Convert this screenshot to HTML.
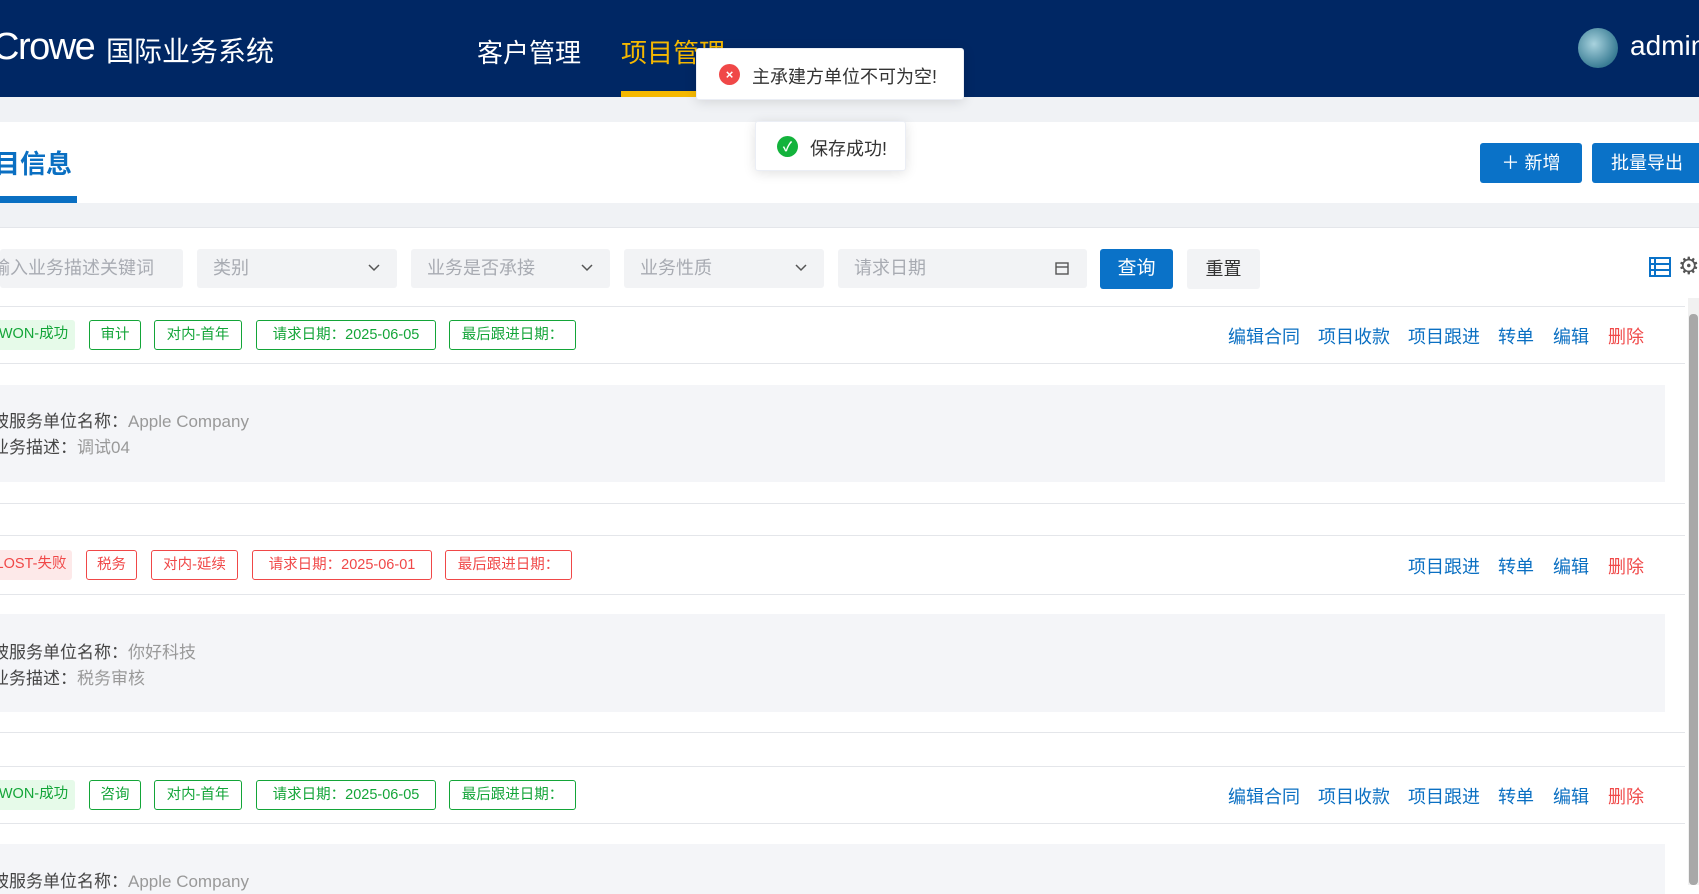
<!DOCTYPE html>
<html><head><meta charset="utf-8"><style>
*{margin:0;padding:0;box-sizing:border-box}
body{width:1699px;height:885px;overflow:hidden;background:#fff;font-family:"Liberation Sans","Noto Sans CJK SC",sans-serif;position:relative}
.a{position:absolute;white-space:nowrap}
.hdr{left:0;top:0;width:1699px;height:97px;background:#002764}
.gray{background:#f0f2f5}
.sel{height:39px;background:#f2f3f5;border-radius:3px;color:#a8abb2;font-size:18px;line-height:39px;padding-left:16px}
.sel svg{position:absolute;right:17px;top:15px}
.tag{height:30px;line-height:28px;font-size:14.5px;border:1px solid;border-radius:3px;text-align:center}
.g{color:#13a538;border-color:#13a538}
.r{color:#f04848;border-color:#f04848}
.act{font-size:18px;color:#0a6fc2}
.line{height:1px;background:#e4e6ea;left:0;width:1685px}
.box{left:0;width:1665px;background:#f4f5f8}
.lb{font-size:17px;color:#444}
.lb span{color:#999}
</style></head><body>
<div class="a hdr"></div>
<div class="a" style="left:-8px;top:26px;font-size:38px;color:#fff;letter-spacing:-1.5px">Crowe</div>
<div class="a" style="left:106px;top:30px;font-size:28px;color:#fff">国际业务系统</div>
<div class="a" style="left:477px;top:33px;font-size:26px;color:#fff">客户管理</div>
<div class="a" style="left:621px;top:33px;font-size:26px;color:#f5b800">项目管理</div>
<div class="a" style="left:621px;top:91px;width:104px;height:6px;background:#f5b800"></div>
<div class="a" style="left:1578px;top:28px;width:40px;height:40px;border-radius:50%;background:radial-gradient(circle at 40% 40%,#a9d3de,#3a7d95 70%,#2a5e73)"></div>
<div class="a" style="left:1630px;top:30px;font-size:28px;color:#fff">admin</div>

<div class="a gray" style="left:0;top:97px;width:1699px;height:25px"></div>
<div class="a" style="left:-6px;top:144px;font-size:26px;font-weight:bold;color:#0a6fc2">目信息</div>
<div class="a" style="left:0;top:196px;width:77px;height:7px;background:#0a6fc2"></div>
<div class="a" style="left:1480px;top:143px;width:102px;height:40px;background:#0a72c8;border-radius:3px;color:#fff;font-size:18px;line-height:40px;text-align:center">＋ 新增</div>
<div class="a" style="left:1592px;top:143px;width:120px;height:40px;background:#0a72c8;border-radius:3px;color:#fff;font-size:18px;line-height:40px;padding-left:19px">批量导出</div>
<div class="a gray" style="left:0;top:203px;width:1699px;height:25px;border-bottom:1px solid #e4e6ea"></div>

<div class="a sel" style="left:0;top:249px;width:183px;padding-left:0;text-indent:-8px">输入业务描述关键词</div>
<div class="a sel" style="left:197px;top:249px;width:200px">类别<svg width="12" height="8"><path d="M1 1L6 6L11 1" fill="none" stroke="#555" stroke-width="1.5"/></svg></div>
<div class="a sel" style="left:411px;top:249px;width:199px">业务是否承接<svg width="12" height="8"><path d="M1 1L6 6L11 1" fill="none" stroke="#555" stroke-width="1.5"/></svg></div>
<div class="a sel" style="left:624px;top:249px;width:200px">业务性质<svg width="12" height="8"><path d="M1 1L6 6L11 1" fill="none" stroke="#555" stroke-width="1.5"/></svg></div>
<div class="a sel" style="left:838px;top:249px;width:249px">请求日期<svg width="14" height="13" style="top:13px;right:18px"><rect x="1" y="1" width="12" height="11" fill="none" stroke="#555" stroke-width="1.4"/><path d="M1 5H13" stroke="#555" stroke-width="1.4"/></svg></div>
<div class="a" style="left:1100px;top:249px;width:73px;height:40px;background:#0a72c8;border-radius:3px;color:#fff;font-size:19px;line-height:40px;text-align:center">查询</div>
<div class="a" style="left:1187px;top:249px;width:73px;height:40px;background:#f2f3f5;border-radius:3px;color:#333;font-size:18px;line-height:40px;text-align:center">重置</div>
<svg class="a" style="left:1649px;top:257px" width="22" height="20"><rect x="1" y="1" width="20" height="18" fill="none" stroke="#0a72c8" stroke-width="2"/><path d="M1 7H21M1 13H21M6 1V19" stroke="#0a72c8" stroke-width="2"/></svg>
<div class="a" style="left:1678px;top:252px;font-size:24px;color:#555">⚙</div>

<div class="a" style="left:1688px;top:298px;width:11px;height:587px;background:#f1f1f1"></div>
<div class="a" style="left:1689px;top:314px;width:9px;height:571px;background:#a8a8a8;border-radius:4px"></div>

<!-- card 1 -->
<div class="a line" style="top:306px"></div>
<div class="a tag" style="left:-8px;top:320px;width:83px;background:#e6fae9;color:#13a538;border:none">WON-成功</div>
<div class="a tag g" style="left:89px;top:320px;width:52px">审计</div>
<div class="a tag g" style="left:154px;top:320px;width:88px">对内-首年</div>
<div class="a tag g" style="left:256px;top:320px;width:180px">请求日期：2025-06-05</div>
<div class="a tag g" style="left:449px;top:320px;width:127px">最后跟进日期：</div>
<div class="a act" style="left:1228px;top:323px">编辑合同</div>
<div class="a act" style="left:1318px;top:323px">项目收款</div>
<div class="a act" style="left:1408px;top:323px">项目跟进</div>
<div class="a act" style="left:1498px;top:323px">转单</div>
<div class="a act" style="left:1553px;top:323px">编辑</div>
<div class="a act" style="left:1608px;top:323px;color:#f04848">删除</div>
<div class="a line" style="top:363px"></div>
<div class="a box" style="top:385px;height:97px"></div>
<div class="a lb" style="left:-8px;top:407px">被服务单位名称：<span>Apple Company</span></div>
<div class="a lb" style="left:-8px;top:433px">业务描述：<span>调试04</span></div>
<div class="a line" style="top:503px"></div>

<!-- card 2 -->
<div class="a line" style="top:535px"></div>
<div class="a tag" style="left:-10px;top:550px;width:82px;background:#fde9e9;color:#f04848;border:none">LOST-失败</div>
<div class="a tag r" style="left:86px;top:550px;width:51px">税务</div>
<div class="a tag r" style="left:151px;top:550px;width:87px">对内-延续</div>
<div class="a tag r" style="left:252px;top:550px;width:180px">请求日期：2025-06-01</div>
<div class="a tag r" style="left:445px;top:550px;width:127px">最后跟进日期：</div>
<div class="a act" style="left:1408px;top:553px">项目跟进</div>
<div class="a act" style="left:1498px;top:553px">转单</div>
<div class="a act" style="left:1553px;top:553px">编辑</div>
<div class="a act" style="left:1608px;top:553px;color:#f04848">删除</div>
<div class="a line" style="top:594px"></div>
<div class="a box" style="top:614px;height:98px"></div>
<div class="a lb" style="left:-8px;top:638px">被服务单位名称：<span>你好科技</span></div>
<div class="a lb" style="left:-8px;top:664px">业务描述：<span>税务审核</span></div>
<div class="a line" style="top:732px"></div>

<!-- card 3 -->
<div class="a line" style="top:766px"></div>
<div class="a tag" style="left:-8px;top:780px;width:83px;background:#e6fae9;color:#13a538;border:none">WON-成功</div>
<div class="a tag g" style="left:89px;top:780px;width:52px">咨询</div>
<div class="a tag g" style="left:154px;top:780px;width:88px">对内-首年</div>
<div class="a tag g" style="left:256px;top:780px;width:180px">请求日期：2025-06-05</div>
<div class="a tag g" style="left:449px;top:780px;width:127px">最后跟进日期：</div>
<div class="a act" style="left:1228px;top:783px">编辑合同</div>
<div class="a act" style="left:1318px;top:783px">项目收款</div>
<div class="a act" style="left:1408px;top:783px">项目跟进</div>
<div class="a act" style="left:1498px;top:783px">转单</div>
<div class="a act" style="left:1553px;top:783px">编辑</div>
<div class="a act" style="left:1608px;top:783px;color:#f04848">删除</div>
<div class="a line" style="top:823px"></div>
<div class="a box" style="top:844px;height:50px"></div>
<div class="a lb" style="left:-8px;top:867px">被服务单位名称：<span>Apple Company</span></div>

<!-- toasts -->
<div class="a" style="left:696px;top:48px;width:268px;height:52px;background:#fff;border:1px solid #ebeef5;box-shadow:0 2px 12px rgba(0,0,0,.12);border-radius:3px"></div>
<div class="a" style="left:719px;top:64px;width:21px;height:21px;border-radius:50%;background:#f04848;color:#fff;font-size:13px;line-height:21px;text-align:center;font-weight:bold">×</div>
<div class="a" style="left:752px;top:63px;font-size:18px;color:#333">主承建方单位不可为空!</div>
<div class="a" style="left:755px;top:121px;width:151px;height:50px;background:#fff;border:1px solid #ebeef5;box-shadow:0 2px 12px rgba(0,0,0,.12);border-radius:3px"></div>
<div class="a" style="left:777px;top:136px;width:21px;height:21px;border-radius:50%;background:#13b33c;color:#fff;font-size:13px;line-height:21px;text-align:center;font-weight:bold">✓</div>
<div class="a" style="left:810px;top:135px;font-size:18px;color:#333">保存成功!</div>
</body></html>
